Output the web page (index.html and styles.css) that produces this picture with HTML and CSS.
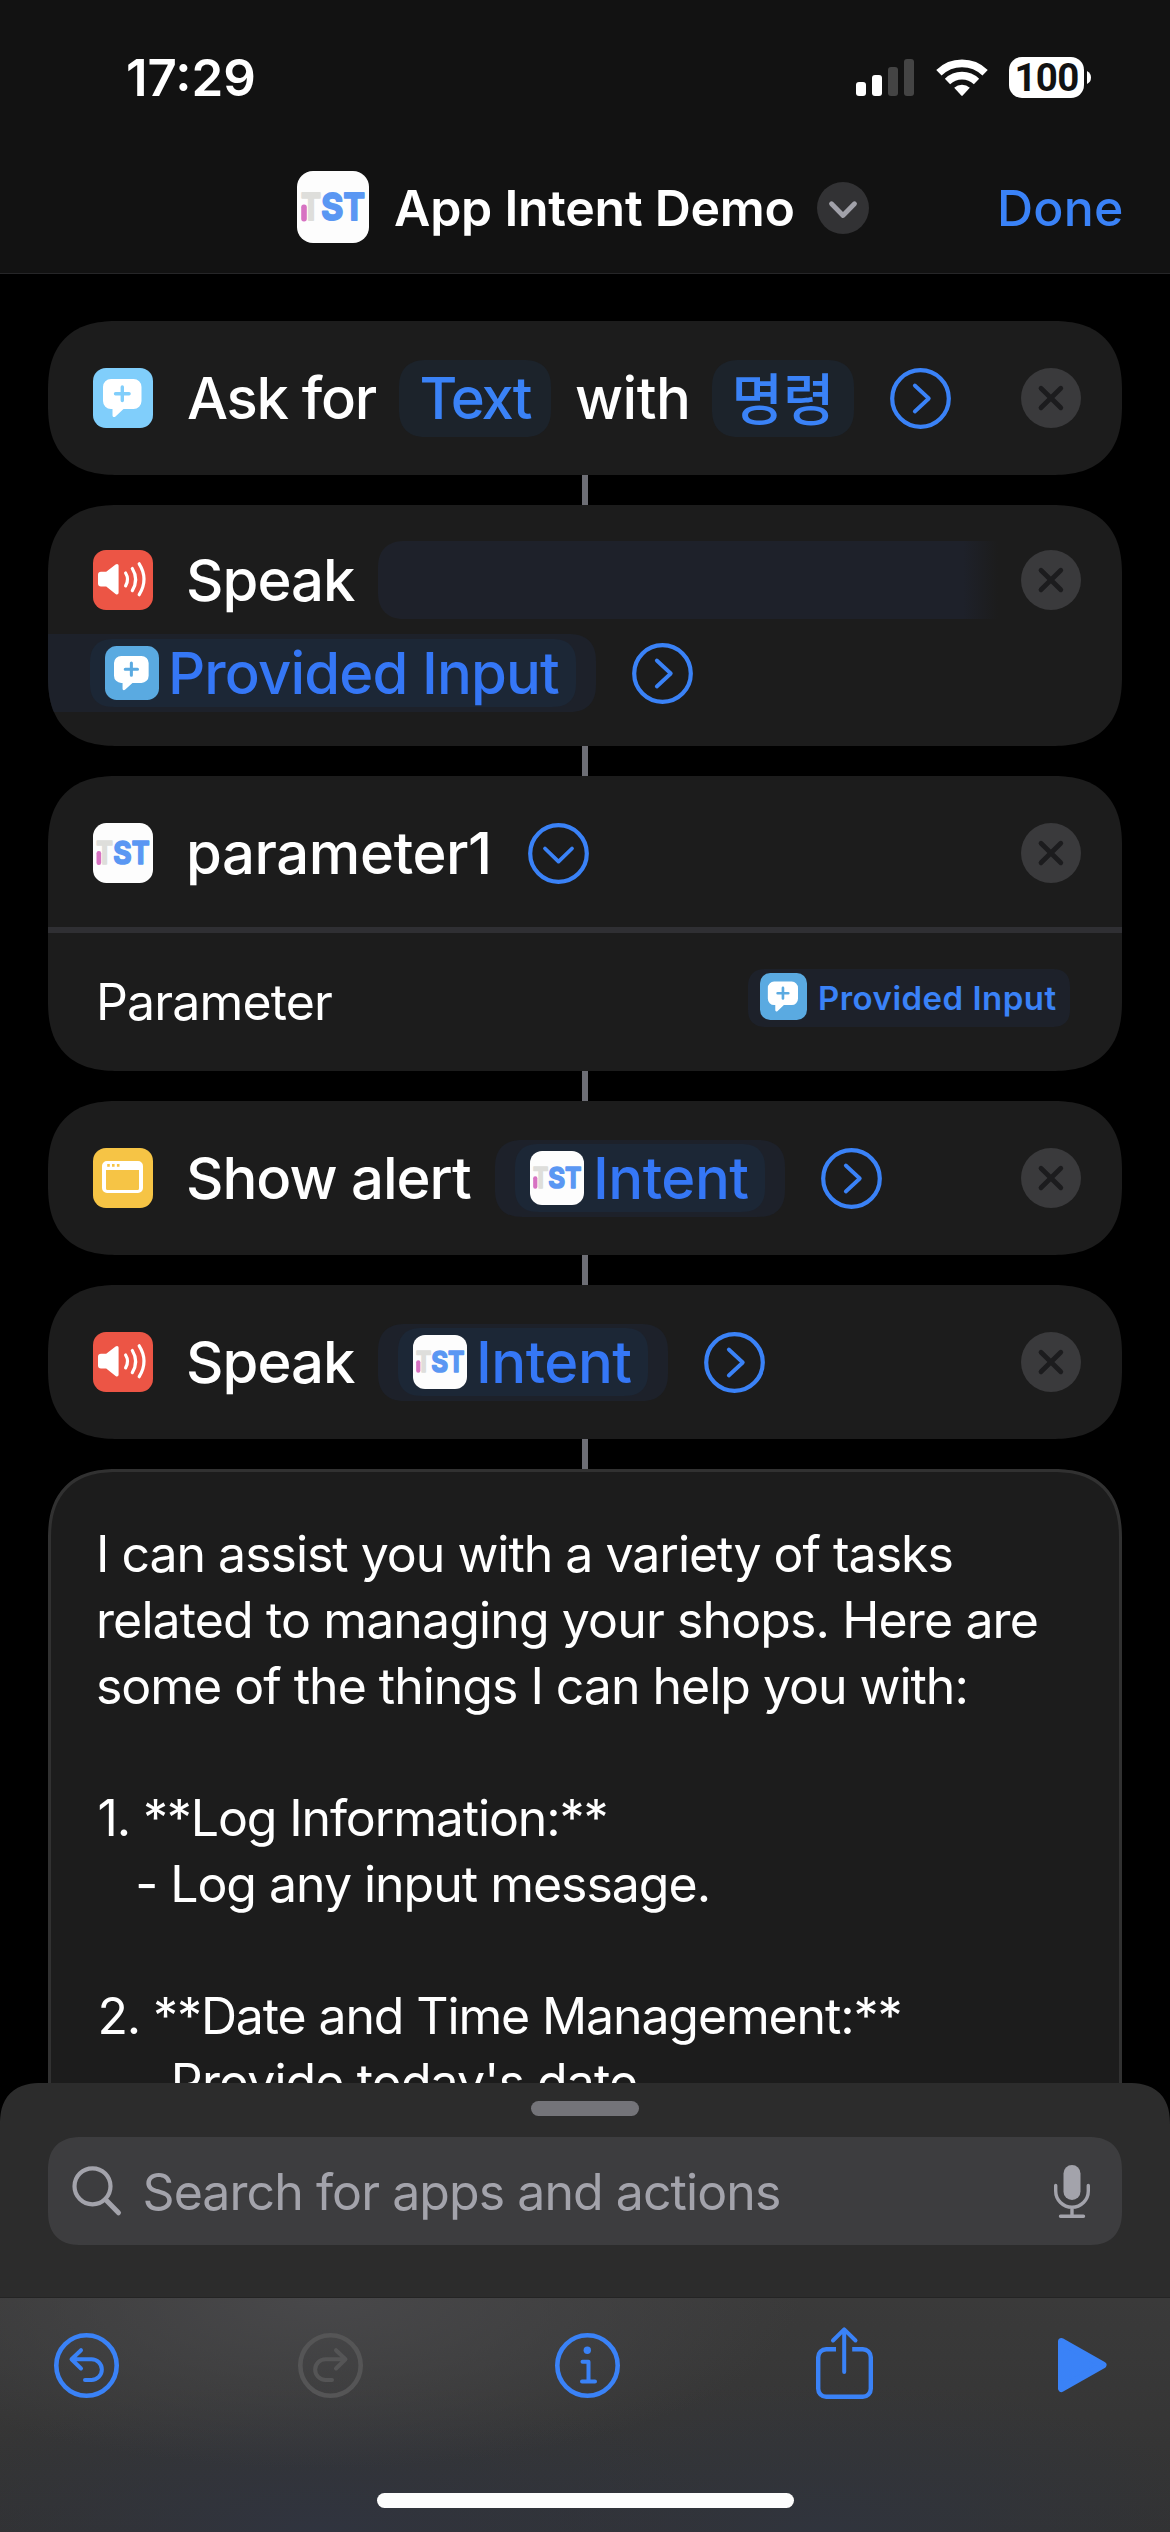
FILE: index.html
```html
<!DOCTYPE html>
<html lang="en">
<head>
<meta charset="utf-8">
<title>App Intent Demo</title>
<link rel="stylesheet" href="styles.css">
</head>
<body>
<svg class="sprite" aria-hidden="true">
  <symbol id="logo" viewBox="0 0 72 72">
    <rect width="72" height="72" rx="16" fill="#fdfdfd"/>
    <g class="logo-text" stroke-width="2" stroke-linejoin="round">
      <text x="4" y="49.400" textLength="20" lengthAdjust="spacingAndGlyphs" fill="#dededb" stroke="#dededb">T</text>
      <text x="24.300" y="49.400" textLength="22" lengthAdjust="spacingAndGlyphs" fill="#5a97f3" stroke="#5a97f3">S</text>
      <text x="46.600" y="49.400" textLength="21.400" lengthAdjust="spacingAndGlyphs" fill="#5a97f3" stroke="#5a97f3">T</text>
    </g>
    <rect x="4.2" y="33.6" width="5.6" height="16.8" rx="2.6" fill="#d772c2"/>
  </symbol>
  <symbol id="ask" viewBox="0 0 60 60">
    <rect width="60" height="60" rx="13" fill="currentColor"/>
    <path d="M18 11h22.5a8 8 0 0 1 8 8v14a8 8 0 0 1-8 8H30.5l-8 7.4c-1.6 1.3-3 .6-3-1.2V41H18a8 8 0 0 1-8-8V19a8 8 0 0 1 8-8z" fill="#fff"/>
    <path d="M22.5 25.8h13.6M29.3 19v13.6" stroke="currentColor" stroke-width="3.4" stroke-linecap="round"/>
  </symbol>
  <symbol id="speaker" viewBox="0 0 60 60">
    <rect width="60" height="60" rx="13" fill="#ec5545"/>
    <path d="M8 21.8h5.2l9.4-7.3c1.5-1.1 3-.4 3 1.4v26.600c0 1.800-1.500 2.500-3 1.400l-9.400-7.400H8c-1.900 0-3-1.100-3-3v-8.700c0-1.900 1.100-3 3-3z" fill="#fff"/>
    <path d="M32.600 23q3.900 6.300 0 12.900M39.300 18.500q6.700 10.900 0 22.100M46.200 13.800q9.600 15.200 0 30.900" fill="none" stroke="#fff" stroke-width="3.200" stroke-linecap="round"/>
  </symbol>
  <symbol id="window" viewBox="0 0 60 60">
    <rect width="60" height="60" rx="13" fill="#f6c445"/>
    <path fill-rule="evenodd" d="M14 13h31a5 5 0 0 1 5 5v22a5 5 0 0 1-5 5H14a5 5 0 0 1-5-5V18a5 5 0 0 1 5-5zm-1 9v18.500a1.500 1.500 0 0 0 1.500 1.500h30a1.500 1.500 0 0 0 1.500-1.500V22z" fill="#fff"/>
    <path d="M14.200 16h2.600v2.800h-2.600zM19 16h2.600v2.800H19zM23.900 16h2.600v2.800h-2.600z" fill="#f6c445"/>
  </symbol>
  <symbol id="more" viewBox="0 0 61 61">
    <circle cx="30.500" cy="30.500" r="28.300" fill="none" stroke="currentColor" stroke-width="4.200"/>
    <path d="M24.800 17.500L38.800 30.500L24.800 43.500" fill="none" stroke="currentColor" stroke-width="3.800" stroke-linecap="round" stroke-linejoin="round"/>
  </symbol>
  <symbol id="less" viewBox="0 0 61 61">
    <circle cx="30.500" cy="30.500" r="28.300" fill="none" stroke="currentColor" stroke-width="4.200"/>
    <path d="M17 25.500L30.500 38.600L44 25.500" fill="none" stroke="currentColor" stroke-width="3.800" stroke-linecap="round" stroke-linejoin="round"/>
  </symbol>
  <symbol id="close" viewBox="0 0 60 60">
    <circle cx="30" cy="30" r="30" fill="#3a3a3c"/>
    <path d="M20 20.200L39.800 39.800M39.800 20.200L20 39.800" stroke="#1c1c1e" stroke-width="4.800" stroke-linecap="round"/>
  </symbol>
</svg>

<div class="screen">
  <header class="header">
    <div class="status">
      <span class="clock">17:29</span>
      <svg class="signal" viewBox="0 0 58 37"><rect y="23" width="10" height="14" rx="3" fill="#fff"/><rect x="16" y="16" width="10" height="21" rx="3" fill="#fff"/><rect x="32" y="8" width="10" height="29" rx="3" fill="#444"/><rect x="48" width="10" height="37" rx="3" fill="#444"/></svg>
      <svg class="wifi" viewBox="0 0 52 38"><g fill="none" stroke="#fff" stroke-width="7.600"><path d="M2.900 13.700A33.200 33.200 0 0 1 49.100 13.700"/><path d="M11.500 22.500A20.800 20.800 0 0 1 40.500 22.500"/></g><path d="M18.200 28.800A11.700 11.700 0 0 1 33.800 28.800L26.700 36.600Q26 37.200 25.300 36.600Z" fill="#fff"/></svg>
      <span class="battery"><span class="level">100</span></span>
      <svg class="nub" viewBox="0 0 4 13"><path d="M0 0Q4 2 4 6.500T0 13Z" fill="#fff"/></svg>
    </div>
    <div class="titlebar">
      <svg class="app-icon"><use href="#logo"/></svg>
      <h1 class="title">App Intent Demo</h1>
      <svg class="title-menu" viewBox="0 0 52 52"><circle cx="26" cy="26" r="26" fill="#323234"/><path d="M14.500 21.800L26 33.500L37.500 21.800" fill="none" stroke="#a1a1a9" stroke-width="4.800" stroke-linecap="round" stroke-linejoin="round"/></svg>
      <a class="done">Done</a>
    </div>
  </header>

  <main class="actions">
    <section class="card row">
      <svg class="tile sky"><use href="#ask"/></svg>
      <span class="label label-ask">Ask for</span>
      <span class="pill pill-text"><span>Text</span></span>
      <span class="label label-with">with</span>
      <span class="pill pill-korean">명령</span>
      <svg class="toggle"><use href="#more"/></svg>
      <svg class="close"><use href="#close"/></svg>
    </section>
    <div class="connector"></div>

    <section class="card card-wrapped">
      <div class="line">
        <svg class="tile"><use href="#speaker"/></svg>
        <span class="label label-speak">Speak</span>
        <span class="pill-start"></span>
        <svg class="close"><use href="#close"/></svg>
      </div>
      <div class="line line-rest">
        <span class="pill-end"><span class="variable variable-input"><svg class="var-icon blue"><use href="#ask"/></svg>Provided Input</span></span>
        <svg class="toggle"><use href="#more"/></svg>
      </div>
    </section>
    <div class="connector"></div>

    <section class="card">
      <div class="row card-head">
        <svg class="tile"><use href="#logo"/></svg>
        <span class="label label-param">parameter1</span>
        <svg class="toggle toggle-down"><use href="#less"/></svg>
        <svg class="close"><use href="#close"/></svg>
      </div>
      <div class="field">
        <span class="field-name">Parameter</span>
        <span class="field-value"><svg class="small-icon blue"><use href="#ask"/></svg><span>Provided Input</span></span>
      </div>
    </section>
    <div class="connector"></div>

    <section class="card row">
      <svg class="tile"><use href="#window"/></svg>
      <span class="label label-alert">Show alert</span>
      <span class="pill pill-intent"><span class="variable variable-intent"><svg class="var-icon"><use href="#logo"/></svg>Intent</span></span>
      <svg class="toggle"><use href="#more"/></svg>
      <svg class="close"><use href="#close"/></svg>
    </section>
    <div class="connector"></div>

    <section class="card row">
      <svg class="tile"><use href="#speaker"/></svg>
      <span class="label label-speak">Speak</span>
      <span class="pill pill-intent"><span class="variable variable-intent"><svg class="var-icon"><use href="#logo"/></svg>Intent</span></span>
      <svg class="toggle"><use href="#more"/></svg>
      <svg class="close"><use href="#close"/></svg>
    </section>
    <div class="connector"></div>

    <section class="card result">
      <div class="text">I can assist you with a variety of tasks</div>
      <div class="text loose">related to managing your shops. Here are</div>
      <div class="text">some of the things I can help you with:</div>
      <div class="text">&nbsp;</div>
      <div class="text item">1. **Log Information:**</div>
      <div class="text">   - Log any input message.</div>
      <div class="text">&nbsp;</div>
      <div class="text item">2. **Date and Time Management:**</div>
      <div class="text loose">   <span class="dash">-</span> Provide today's date.</div>
    </section>
  </main>

  <section class="sheet">
    <div class="grabber"></div>
    <div class="search">
      <svg class="magnifier" viewBox="0 0 50 50"><g fill="none" stroke="#a3a3ab" stroke-linecap="round"><circle cx="20.500" cy="20.300" r="18" stroke-width="4.200"/><path d="M33.500 33.500L46.500 46.800" stroke-width="5"/></g></svg>
      <span class="placeholder">Search for apps and actions</span>
      <svg class="mic" viewBox="0 0 36 53"><rect x="9.500" width="17" height="35" rx="8.500" fill="#a3a3ab"/><path d="M1.700 20.500V26a16.300 16.300 0 0 0 32.600 0V20.500M18 42.500V51M6.500 51.200H29.500" fill="none" stroke="#a3a3ab" stroke-width="3.400" stroke-linecap="round"/></svg>
    </div>
  </section>

  <footer class="toolbar">
    <nav class="tools">
      <svg class="tool undo" viewBox="0 0 65 65"><g fill="none" stroke="currentColor" stroke-linecap="round" stroke-linejoin="round"><circle cx="32.500" cy="32.500" r="30.200" stroke-width="4.600"/><path d="M27 17.200L17.500 26.200L27 35.500M18 26.200H37.500A10.300 10.300 0 0 1 37.500 46.900H31" stroke-width="4"/></g></svg>
      <svg class="tool redo" viewBox="0 0 65 65"><g fill="none" stroke="currentColor" stroke-linecap="round" stroke-linejoin="round"><circle cx="32.500" cy="32.500" r="30.200" stroke-width="4.600"/><path d="M38 17.200L47.500 26.200L38 35.500M47 26.200H27.500A10.300 10.300 0 0 0 27.500 46.900H34" stroke-width="4"/></g></svg>
      <svg class="tool info" viewBox="0 0 65 65"><circle cx="32.500" cy="32.500" r="30.200" fill="none" stroke="currentColor" stroke-width="4.600"/><circle cx="32.300" cy="17.300" r="3.700" fill="currentColor"/><path d="M27.500 28.700H33.500V48.200M27 48.400H40" fill="none" stroke="currentColor" stroke-width="4" stroke-linecap="round" stroke-linejoin="round"/></svg>
      <svg class="tool share" viewBox="0 0 57 72"><g fill="none" stroke="currentColor" stroke-width="4.400"><path d="M20 22.200H10.200A8 8 0 0 0 2.200 30.200V61.800A8 8 0 0 0 10.200 69.800H46.800A8 8 0 0 0 54.800 61.800V30.200A8 8 0 0 0 46.800 22.200H36.200"/><path d="M28.200 45V2.500M17 13.500L28.200 2.300L39.500 13.500" stroke-width="4" stroke-linecap="round" stroke-linejoin="round"/></g></svg>
      <svg class="tool play" viewBox="0 0 48 54"><path d="M3.500 3.500L45 27L3.500 50.500Z" fill="currentColor" stroke="currentColor" stroke-width="7" stroke-linejoin="round"/></svg>
    </nav>
    <div class="home-indicator"></div>
  </footer>
</div>
</body>
</html>
```
FILE: styles.css
```css
* { box-sizing: border-box; }

body {
  margin: 0;
  background: #000;
  color: #fff;
  font-family: Inter, "Noto Sans CJK KR", sans-serif;
}

svg { display: block; flex: none; overflow: visible; }
.sprite { position: absolute; width: 0; height: 0; }
.logo-text { font: 700 37.500px Inter, sans-serif; }

.screen {
  width: 1170px;
  height: 2532px;
  display: flex;
  flex-direction: column;
  overflow: hidden;
}

/* Header */
.header {
  flex: none;
  height: 274px;
  background: #121212;
  border-bottom: 1px solid #262628;
}
.status { display: flex; align-items: center; height: 155px; padding-left: 126px; }
.clock { width: 730px; font-size: 51px; font-weight: 600; line-height: 60px; }
.signal { width: 58px; height: 37px; }
.wifi { width: 52px; height: 38px; margin-left: 21.500px; }
.battery {
  display: flex;
  align-items: center;
  justify-content: center;
  width: 75px;
  height: 41px;
  margin-left: 21.500px;
  border-radius: 13px;
  background: #fff;
}
.level { color: #121212; font-family: Roboto, sans-serif; font-size: 38.500px; font-weight: 700; line-height: 41px; letter-spacing: -0.700px; }
.nub { width: 4px; height: 13px; margin-left: 3px; }

.titlebar { display: flex; align-items: center; height: 106px; padding-left: 297px; }
.app-icon { width: 72px; height: 72px; margin-bottom: 2px; }
.title { width: 423px; margin: 0 0 0 25px; font-size: 50px; font-weight: 600; letter-spacing: -0.250px; white-space: nowrap; }
.title-menu { width: 52px; height: 52px; }
.done { margin: 0 0 1px 128px; color: #3a82f7; font-size: 50px; font-weight: 500; letter-spacing: 0.200px; }

/* Action cards */
.actions { flex: none; height: 1809px; padding: 47px 48px 0; overflow: hidden; }
.card {
  border-radius: 70px;
  corner-shape: superellipse(1.3);
  background: #1c1c1c;
  overflow: hidden;
}
.connector { width: 6px; height: 30px; margin: 0 auto; background: #6d6e75; }
.row { display: flex; align-items: center; height: 154px; padding: 0 41px 0 45px; }
.tile { width: 60px; height: 60px; }
.sky { color: #80cefb; }
.blue { color: #5aaae1; }
.label { flex: none; margin-left: 34px; font-size: 58px; font-weight: 500; line-height: 76px; white-space: nowrap; }
.label-ask { width: 212px; letter-spacing: -1.300px; }
.label-with { width: 137px; margin-left: 24px; letter-spacing: -0.500px; }
.label-speak { width: 192px; margin-left: 33px; letter-spacing: -0.970px; }
.label-alert { width: 309px; margin-left: 33px; letter-spacing: -1px; }
.label-param { width: 342px; margin-left: 33px; letter-spacing: -0.400px; }

.pill {
  display: flex;
  align-items: center;
  justify-content: center;
  flex: none;
  height: 77px;
  border-radius: 28px;
  corner-shape: superellipse(1.3);
  background: #1c232b;
  color: #3a82f7;
  font-size: 58px;
  font-weight: 500;
  line-height: 76px;
}
.pill-text { width: 152px; letter-spacing: -2px; }
.pill-korean { width: 142px; padding-bottom: 5px; font-family: "Noto Sans CJK KR", sans-serif; font-size: 56px; }
.pill-intent { width: 290px; background: #1d212a; }
.toggle { width: 61px; height: 61px; margin-left: 36px; color: #3a82f7; }
.toggle-down { margin-left: 0; }
.close { width: 60px; height: 60px; margin-left: auto; }

.variable {
  display: flex;
  align-items: center;
  height: 68px;
  padding-left: 15px;
  border-radius: 24px;
  corner-shape: superellipse(1.3);
  background: #1c2736;
  color: #3577f6;
  font-size: 58px;
  font-weight: 500;
  line-height: 68px;
  white-space: nowrap;
}
.variable-intent { width: 250px; letter-spacing: -0.500px; }
.variable-input { width: 486px; letter-spacing: -0.850px; }
.var-icon { width: 54px; height: 54px; margin-right: 9px; }

.card-wrapped { height: 241px; padding-top: 36px; }
.line { display: flex; align-items: center; height: 78px; padding: 0 41px 0 45px; }
.line-rest { margin-top: 15px; padding-left: 0; }
.pill-start {
  width: 620px;
  height: 78px;
  border-radius: 28px 0 0 28px;
  corner-shape: superellipse(1.3);
  background: linear-gradient(90deg, #1e212a 585px, #1c1c1c 620px);
}
.pill-end {
  display: flex;
  align-items: center;
  width: 548px;
  height: 78px;
  padding-left: 42px;
  border-radius: 0 28px 28px 0;
  corner-shape: superellipse(1.3);
  background: #1d212a;
}

.card-head { height: 151px; padding-top: 3px; }
.field {
  display: flex;
  align-items: center;
  justify-content: space-between;
  height: 144px;
  padding: 0 52px 0 48px;
  border-top: 6px solid #2f2f33;
}
.field-name { font-size: 50px; letter-spacing: -0.860px; }
.field-value {
  display: flex;
  align-items: center;
  width: 322px;
  height: 58px;
  margin-bottom: 8px;
  padding-left: 12px;
  border-radius: 18px;
  corner-shape: superellipse(1.3);
  background: #1d212a;
  color: #3a82f7;
  font-size: 33px;
  font-weight: 600;
  line-height: 58px;
  letter-spacing: 0.480px;
  white-space: nowrap;
}
.small-icon { width: 47px; height: 47px; margin: 0 11px 3px 0; }

.result {
  height: 760px;
  padding: 49px 45px;
  border: 3px solid #313131;
}
.text { height: 66px; font-size: 50px; line-height: 66px; letter-spacing: -1.020px; white-space: pre; }
.loose { letter-spacing: -0.880px; }
.item { padding-left: 1.500px; letter-spacing: -1.130px; }
.dash { display: inline-block; height: 66px; vertical-align: -5px; }

/* Action search sheet */
.sheet {
  flex: none;
  height: 215px;
  padding: 18px 48px 0;
  border-radius: 42px 42px 0 0;
  corner-shape: superellipse(1.3);
  background: linear-gradient(#2c2c2c 214px, #242424 214px);
}
.grabber { width: 108px; height: 15px; margin: 0 auto 21px; border-radius: 7.500px; background: #747479; }
.search {
  display: flex;
  align-items: center;
  height: 108px;
  padding: 0 32px 0 24px;
  border-radius: 34px;
  corner-shape: superellipse(1.3);
  background: #3d3d3f;
}
.magnifier { width: 50px; height: 50px; }
.placeholder { margin: 2px 0 0 20.500px; color: #a3a3ab; font-size: 50px; line-height: 60px; letter-spacing: -0.930px; }
.mic { width: 36px; height: 53px; margin-left: auto; }

/* Bottom toolbar */
.toolbar {
  flex: 1;
  background:
    radial-gradient(ellipse 480px 170px at 320px 0, #48484a, transparent),
    radial-gradient(ellipse 420px 150px at 320px 100%, #30343f, transparent),
    radial-gradient(ellipse 420px 150px at 820px 100%, #30343d, transparent),
    linear-gradient(#3a3a3a, #323232);
}
.tools { display: flex; align-items: center; height: 134px; padding-left: 54px; color: #3a82f7; }
.tool { width: 65px; height: 65px; }
.redo { margin-left: 179px; color: #555556; }
.info { margin-left: 192px; }
.share { width: 57px; height: 72px; margin: 0 0 5px 196px; }
.play { width: 48px; height: 54px; margin-left: 185px; }
.home-indicator { width: 417px; height: 15px; margin: 61px auto 0; border-radius: 7.500px; background: #fdfdfd; }
```
